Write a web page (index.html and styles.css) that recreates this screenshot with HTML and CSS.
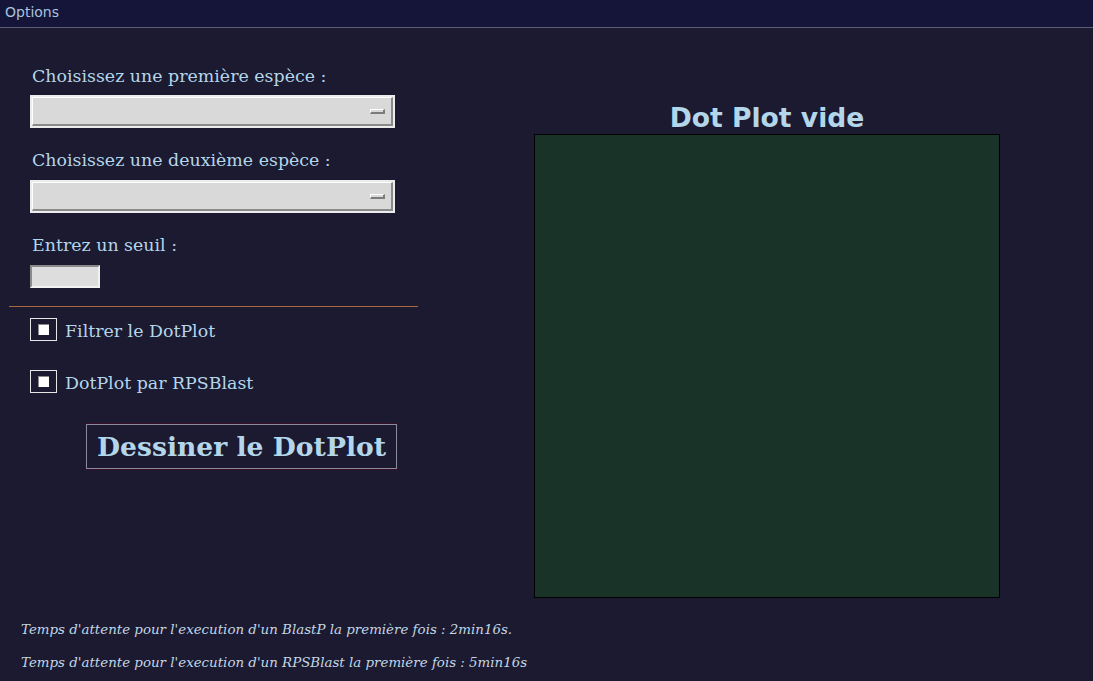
FILE: index.html
```html
<!DOCTYPE html>
<html lang="fr">
<head>
<meta charset="utf-8">
<title>DotPlot</title>
<link rel="stylesheet" href="styles.css">
</head>
<body>
<div class="menubar"><span class="menu-item">Options</span></div>
<div class="main">
  <div class="left">
    <div class="field-label first">Choisissez une première espèce :</div>
    <div class="combo"><div class="combo-inner"><span class="combo-arrow"></span></div></div>
    <div class="field-label">Choisissez une deuxième espèce :</div>
    <div class="combo"><div class="combo-inner"><span class="combo-arrow"></span></div></div>
    <div class="field-label">Entrez un seuil :</div>
    <div class="entry"></div>
    <div class="separator"></div>
    <div class="check-row"><span class="checkbox"><span class="check-mark"></span></span><span class="check-text">Filtrer le DotPlot</span></div>
    <div class="check-row second"><span class="checkbox"><span class="check-mark"></span></span><span class="check-text">DotPlot par RPSBlast</span></div>
    <div class="button-row"><button class="draw-btn">Dessiner le DotPlot</button></div>
  </div>
  <div class="right">
    <div class="plot-title">Dot Plot vide</div>
    <div class="canvas"></div>
  </div>
</div>
<div class="footer">
  <div class="note">Temps d'attente pour l'execution d'un BlastP la première fois : 2min16s.</div>
  <div class="note">Temps d'attente pour l'execution d'un RPSBlast la première fois : 5min16s</div>
</div>
</body>
</html>
```
FILE: styles.css
```css
html, body {
  margin: 0;
  padding: 0;
}
body {
  width: 1093px;
  height: 681px;
  overflow: hidden;
  background: #1b1a30;
  color: #b4d6ea;
  font-family: "DejaVu Serif", serif;
  position: relative;
}
.menubar {
  height: 28px;
  background: #15153a;
  border-bottom: 1px solid #5c5c74;
  box-sizing: border-box;
  display: flex;
  align-items: center;
  padding-left: 5px;
}
.menu-item {
  font-family: "DejaVu Sans", sans-serif;
  font-size: 14px;
  color: #a8c4de;
  margin-top: -4px;
}
.main {
  display: flex;
}
.left {
  width: 420px;
  padding-left: 9px;
  box-sizing: border-box;
  display: flex;
  flex-direction: column;
}
.field-label {
  font-size: 17.4px;
  line-height: 22px;
  height: 22px;
  margin-left: 23px;
  margin-top: 21px;
  margin-bottom: 9px;
  white-space: nowrap;
}
.field-label.first {
  margin-top: 37px;
  margin-bottom: 8px;
}
.combo {
  margin-left: 21px;
  width: 365px;
  height: 33px;
  box-sizing: border-box;
  border: 2px solid #ececec;
  background: #d9d9d9;
}
.combo-inner {
  height: 100%;
  box-sizing: border-box;
  border-top: 1px solid #ffffff;
  border-left: 1px solid #ffffff;
  border-right: 2px solid #8a8a8a;
  border-bottom: 2px solid #8a8a8a;
  display: flex;
  justify-content: flex-end;
  align-items: center;
  padding-right: 6px;
}
.combo-arrow {
  width: 15px;
  height: 5px;
  box-sizing: border-box;
  background: #d9d9d9;
  border-top: 1px solid #ffffff;
  border-left: 1px solid #ffffff;
  border-right: 2px solid #7c7c7c;
  border-bottom: 2px solid #7c7c7c;
}
.entry {
  margin-left: 21px;
  width: 70px;
  height: 23px;
  box-sizing: border-box;
  background: #dddddd;
  border-top: 2px solid #8a8a8a;
  border-left: 2px solid #8a8a8a;
  border-right: 2px solid #f2f2f2;
  border-bottom: 2px solid #f2f2f2;
}
.separator {
  margin-top: 18px;
  width: 409px;
  height: 1px;
  background: #a8683a;
}
.check-row {
  margin-left: 21px;
  margin-top: 11px;
  display: flex;
  align-items: center;
  height: 23px;
}
.check-row.second {
  margin-top: 29px;
}
.checkbox {
  width: 27px;
  height: 23px;
  box-sizing: border-box;
  border: 1px solid #e6e6e6;
  display: flex;
  align-items: center;
  justify-content: center;
}
.check-mark {
  width: 11px;
  height: 11px;
  box-sizing: border-box;
  background: #ffffff;
  border-top: 1px solid #8a8a8a;
  border-left: 1px solid #8a8a8a;
}
.check-text {
  font-size: 17.4px;
  margin-left: 8px;
  margin-top: 2px;
  white-space: nowrap;
}
.button-row {
  margin-top: 31px;
  padding-left: 77px;
}
.draw-btn {
  width: 311px;
  height: 45px;
  box-sizing: border-box;
  background: #1b1a30;
  border: 1px solid #8c8a9a;
  outline: 1px solid #3a0f28;
  color: #b4d6ea;
  font-family: "DejaVu Serif", serif;
  font-weight: bold;
  font-size: 26.6px;
  padding: 0;
  margin: 0;
  white-space: nowrap;
}
.right {
  margin-left: 114px;
  display: flex;
  flex-direction: column;
  align-items: center;
  width: 466px;
}
.plot-title {
  font-family: "DejaVu Sans", sans-serif;
  font-weight: bold;
  font-size: 26.6px;
  line-height: 30px;
  margin-top: 75px;
  margin-bottom: 1px;
  white-space: nowrap;
}
.canvas {
  width: 466px;
  height: 464px;
  box-sizing: border-box;
  background: #1a3329;
  border: 1px solid #000000;
}
.footer {
  position: absolute;
  left: 21px;
  top: 622px;
}
.note {
  font-style: italic;
  font-size: 13.4px;
  line-height: 16px;
  margin-bottom: 17px;
  color: #c2d6e6;
  white-space: nowrap;
}
```
